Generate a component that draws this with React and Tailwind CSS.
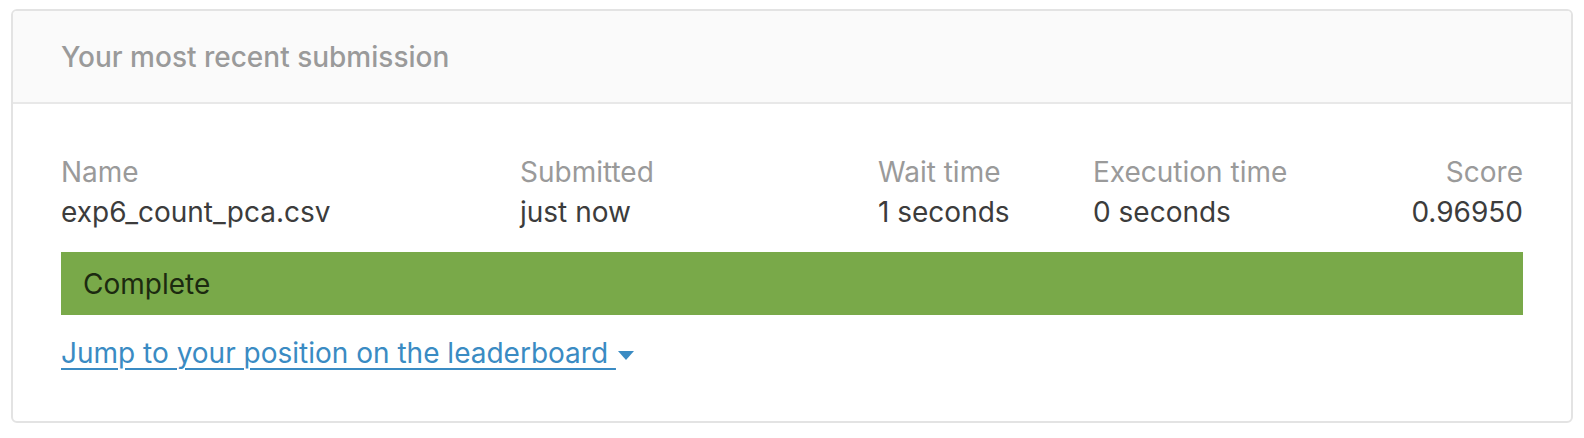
export default function App() {
    const cols = [
        { label: "Name", value: "exp6_count_pca.csv" },
        { label: "Submitted", value: "just now" },
        { label: "Wait time", value: "1 seconds" },
        { label: "Execution time", value: "0 seconds" },
    ];

    return (
        <div className="bg-white px-[11px] pt-[9px] pb-[16px] font-['Inter','Noto_Sans',sans-serif]">
            <div className="border-2 border-[#e3e3e3] rounded-[6px] overflow-hidden">
                {/* Header */}
                <div className="bg-[#fafafa] border-b-2 border-[#e8e8e8] h-[93px] flex items-center px-12">
                    <h2 className="text-[28px] font-medium text-[#9a9a9a]">Your most recent submission</h2>
                </div>

                {/* Body */}
                <div className="px-12 pt-[48px] pb-[48px]">
                    <div className="grid grid-cols-[459px_358px_215px_1fr_auto] text-[28px] leading-[40px]">
                        {cols.map((c) => (
                            <div key={c.label}>
                                <p className="text-[#9a9a9a]">{c.label}</p>
                                <p className="text-[#3c3c3c]">{c.value}</p>
                            </div>
                        ))}
                        <div className="text-right">
                            <p className="text-[#9a9a9a]">Score</p>
                            <p className="text-[#3c3c3c]">0.96950</p>
                        </div>
                    </div>

                    <div className="mt-[20px] h-[63px] bg-[#79a949] flex items-center px-[22px]">
                        <span className="text-[28px] text-[#1c2a10]">Complete</span>
                    </div>

                    <div className="mt-[18px] text-[28px] leading-[40px]">
                        <a href="#" className="text-[#3a8bc3] underline underline-offset-[5px] decoration-2">
                            Jump to your position on the leaderboard&nbsp;
                        </a>
                        <svg className="inline-block ml-[2px] align-middle" width="16" height="9" viewBox="0 0 16 9">
                            <path d="M0 0 L16 0 L8 9 Z" fill="#3a8bc3" />
                        </svg>
                    </div>
                </div>
            </div>
        </div>
    );
}
